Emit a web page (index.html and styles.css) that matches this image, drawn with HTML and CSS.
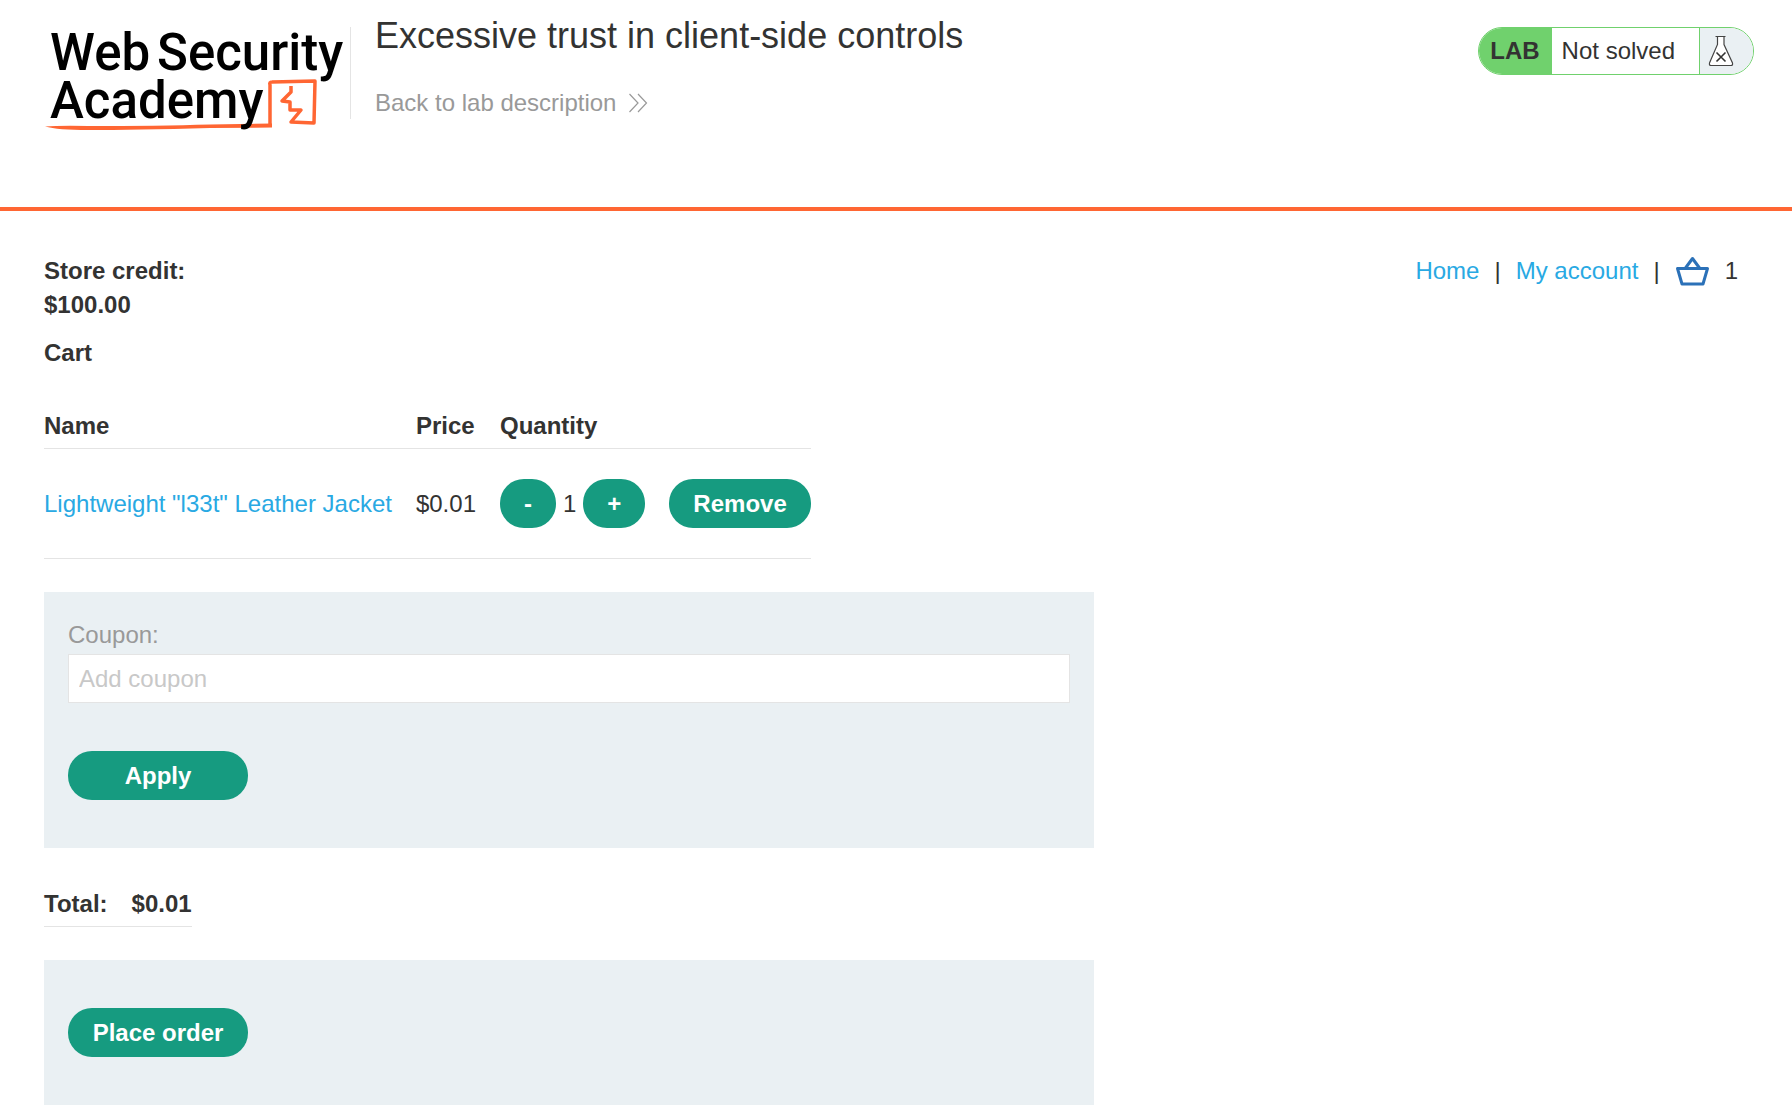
FILE: index.html
```html
<!DOCTYPE html>
<html lang="en">
<head>
<meta charset="utf-8">
<meta name="viewport" content="width=device-width, initial-scale=1">
<title>Excessive trust in client-side controls</title>
<link rel="stylesheet" href="styles.css">
</head>
<body>
<header class="lab-header">
  <a class="logo" href="#" aria-label="Web Security Academy">
    <svg class="logo-art" width="306" height="106" viewBox="0 0 306 106">
      <path d="M226 99V58q-1-3 2-3l43-1-1 42-23-1 10-12-11 0v-8l-8-1 9-9V59" fill="none" stroke="#ff6633" stroke-width="3.500" stroke-linejoin="round"/>
      <path d="M1 99.500q14-1 43-.5 70 0 122-1.500l62-1v4l-62 .5Q90 103 44 103 14 103 1 99.500z" fill="#ff6633"/>
      <text class="logo-text" x="6" y="43">Web</text>
      <text class="logo-text" x="113" y="43">Security</text>
      <text class="logo-text" x="6" y="91">Academy</text>
    </svg>
  </a>
  <div class="lab-title">
    <h2 class="title">Excessive trust in client-side controls</h2>
    <a class="back-link" href="#">Back to lab description
      <svg width="20" height="20" viewBox="0 0 20 20" fill="none" stroke="#999" stroke-width="1.200"><path d="M1.500 1l8.500 9-8.500 9M10 1l8.500 9-8.500 9"/></svg>
    </a>
  </div>
  <div class="lab-status">
    <span class="status-tag">LAB</span>
    <span class="status-text">Not solved</span>
    <span class="status-icon">
      <svg width="26" height="32" viewBox="0 0 26 32"><path d="M7.500 1.500h10M9.500 2v7.500L1.500 28q-.5 2.500 1.500 2.500h20q2 0 1.500-2.500L16 9.500V2" fill="#fff" stroke="#444" stroke-width="1.200"/><path d="M8.500 17.500l9 9M17.500 17.500l-9 9" stroke="#333332" stroke-width="1.600"/></svg>
    </span>
  </div>
</header>
<main class="page">
  <div class="top-row">
    <p class="credit"><strong>Store credit:<br>$100.00</strong></p>
    <nav class="nav">
      <a href="#">Home</a><span>|</span><a href="#">My account</a><span>|</span>
      <a class="basket" href="#" aria-label="Basket"><svg width="35" height="30" viewBox="0 0 35 30" fill="none" stroke="#2b71b8" stroke-width="3" stroke-linejoin="round"><path d="M2.500 12.500h30l-4.500 15.500H7z"/><path d="M10.500 12l7-9.500 7 9.500"/></svg></a>
      <span class="count">1</span>
    </nav>
  </div>
  <h1 class="cart-title">Cart</h1>
  <table class="cart">
    <thead><tr><th>Name</th><th>Price</th><th>Quantity</th><th></th></tr></thead>
    <tbody><tr>
      <td><a href="#">Lightweight "l33t" Leather Jacket</a></td>
      <td>$0.01</td>
      <td><div class="quantity"><button class="button" type="button">-</button><span>1</span><button class="button" type="button">+</button></div></td>
      <td><button class="button" type="button">Remove</button></td>
    </tr></tbody>
  </table>
  <form class="panel coupon">
    <label class="coupon-label" for="coupon">Coupon:</label>
    <input class="coupon-input" id="coupon" type="text" placeholder="Add coupon">
    <button class="button button-wide" type="button">Apply</button>
  </form>
  <table class="total">
    <tbody><tr><th scope="row">Total:</th><th>$0.01</th></tr></tbody>
  </table>
  <form class="panel order">
    <button class="button button-wide" type="button">Place order</button>
  </form>
</main>
</body>
</html>
```

FILE: styles.css
```css
* { box-sizing: border-box; }

body {
  margin: 0;
  background: #fff;
  color: #333332;
  font: 24px/34px "Liberation Sans", Arial, sans-serif;
}

a { color: #29a9e3; text-decoration: none; }

.lab-header {
  display: flex;
  align-items: flex-start;
  min-height: 211px;
  padding: 27px 38px 0 44px;
  border-bottom: 4px solid #ff6633;
}

.logo {
  height: 92px;
  border-right: 1px solid #e4e4e4;
}
.logo-art { display: block; overflow: visible; }
.logo-text {
  font: 500 51px Roboto, sans-serif;
  fill: #000;
}

.lab-title { padding-left: 24px; }
.title {
  margin: -12px 0 29px;
  font-size: 36px;
  line-height: 42px;
  font-weight: 400;
}
.back-link {
  display: flex;
  align-items: center;
  gap: 12px;
  color: #999;
}

.lab-status {
  display: flex;
  height: 48px;
  margin-left: auto;
  border: 1px solid #70d16d;
  border-radius: 24px;
  overflow: hidden;
  line-height: 46px;
}
.status-tag {
  padding: 0 12px 0 11px;
  background: #70d16d;
  font-weight: 700;
}
.status-text { padding: 0 24px 0 10px; }
.status-icon {
  display: flex;
  align-items: center;
  padding: 0 19px 0 8px;
  border-left: 1px solid #70d16d;
  background: #eaf0f3;
}

.page { padding: 43px 44px 9px; }

.top-row { display: flex; justify-content: space-between; }
.credit { margin: 0; }
.nav {
  display: flex;
  gap: 15px;
  height: 34px;
  padding-right: 10px;
}
.basket { display: flex; align-items: center; }

.cart-title {
  margin: 14px 0 39px;
  font-size: 24px;
  line-height: 34px;
}

.cart, .total { border-collapse: separate; border-spacing: 0; }
th, td {
  padding: 0 24px 5px 0;
  border-bottom: 1px solid #e4e4e4;
  text-align: left;
}
td { padding: 30px 24px 30px 0; }
th:last-child, td:last-child { padding-right: 0; }

.quantity { display: flex; align-items: center; gap: 7px; }

.button {
  display: block;
  height: 49px;
  padding: 0 24px;
  border: 0;
  border-radius: 24px;
  background: #169b80;
  color: #fff;
  font: 700 24px "Liberation Sans", Arial, sans-serif;
  white-space: nowrap;
}
.button-wide { min-width: 180px; }

.panel {
  max-width: 1050px;
  margin: 33px 0 0;
  padding: 24px 24px 48px;
  background: #eaf0f3;
}
.coupon-label {
  display: block;
  color: #999;
  line-height: 38px;
}
.coupon-input {
  display: block;
  width: 100%;
  height: 49px;
  margin-bottom: 48px;
  padding: 0 10px;
  border: 1px solid #e4e4e4;
  background: #fff;
  color: #333332;
  font: 24px "Liberation Sans", Arial, sans-serif;
}
.coupon-input::placeholder { color: #c8c8c8; }

.total { margin-top: 39px; }
.order { padding-top: 48px; }
```
